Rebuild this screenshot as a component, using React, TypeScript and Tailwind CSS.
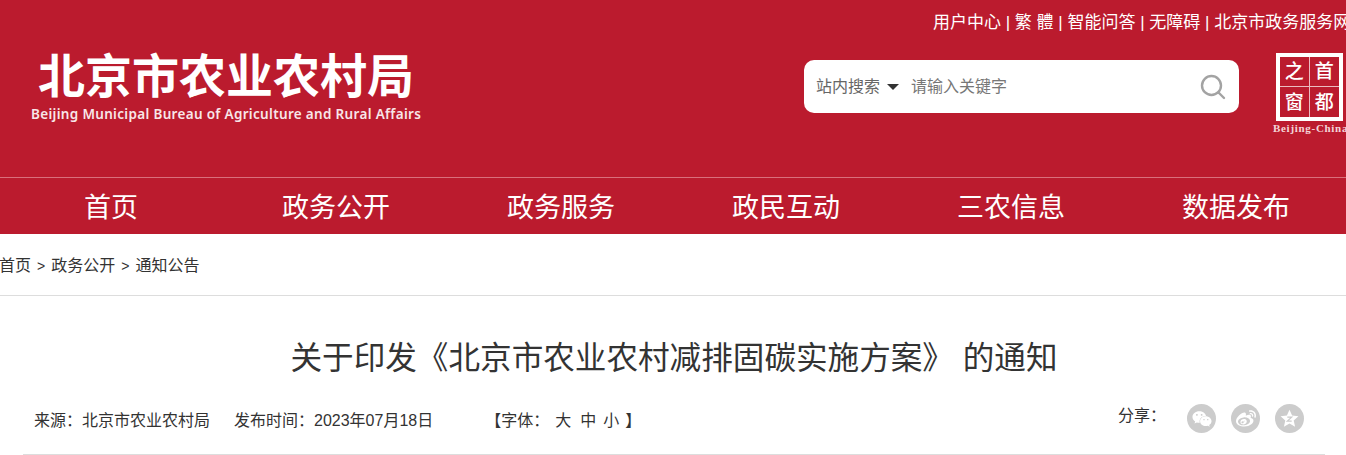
import { FaWeixin, FaWeibo } from "react-icons/fa";

const cjk = "font-['Liberation_Sans','Noto_Sans_CJK_SC',sans-serif]";

const navItems = ["首页", "政务公开", "政务服务", "政民互动", "三农信息", "数据发布"];

const ShareIcon = ({ children }: { children: React.ReactNode }) => (
  <span className="flex h-[29px] w-[29px] items-center justify-center rounded-full bg-[#cccccc] text-[20px] text-white">
    {children}
  </span>
);

export default function App() {
  return (
    <div className={`h-[455px] w-[1346px] overflow-hidden bg-white ${cjk}`}>
      <header className="h-[234px] bg-[#bb1b2e] text-white">
        <div className="h-[177px]">
          <div className="flex h-[44px] items-center overflow-hidden whitespace-nowrap pl-[933px] pt-[1px] text-[17px]">
            <span>用户中心 | 繁 體 | 智能问答 | 无障碍 | 北京市政务服务网</span>
          </div>
          <div className="flex items-start">
            <div className="ml-[31px] mt-[8px] w-[400px] shrink-0">
              <div className="ml-[7px] text-[47px] font-bold leading-[50px]">北京市农业农村局</div>
              <div className="mt-[3px] whitespace-nowrap font-['Noto_Sans',sans-serif] text-[13.5px] font-semibold leading-[18px] tracking-[0.32px] text-[#f8e6e8]">
                Beijing Municipal Bureau of Agriculture and Rural Affairs
              </div>
            </div>
            <div className="ml-[373px] mt-[16px] flex h-[53px] w-[435px] shrink-0 items-center rounded-[10px] bg-white pl-[12px] pr-[13px] pt-[1px] text-[16px] text-[#666]">
              <span>站内搜索</span>
              <span className="ml-[7px] h-0 w-0 border-x-[6px] border-t-[6px] border-x-transparent border-t-[#333]" />
              <span className="ml-[12px] flex-1 text-[#777]">请输入关键字</span>
              <svg viewBox="0 0 26 26" className="h-[26px] w-[26px]" fill="none" stroke="#a3a3a3" strokeWidth="2.4">
                <circle cx="11.5" cy="11.5" r="9.5" />
                <path d="M18.5 18.5 L24 24" strokeLinecap="round" />
              </svg>
            </div>
            <div className="ml-[37px] mt-[9px] w-[73px] shrink-0">
              <div className="grid h-[68px] w-[67px] grid-cols-2 grid-rows-2 border-[4px] border-white text-[19px] font-medium leading-none">
                <span className="flex items-center justify-center border-b border-r border-white/70">之</span>
                <span className="flex items-center justify-center border-b border-white/70">首</span>
                <span className="flex items-center justify-center border-r border-white/70">窗</span>
                <span className="flex items-center justify-center">都</span>
              </div>
              <div className="-ml-[3px] mt-[1px] whitespace-nowrap font-['Liberation_Serif',serif] text-[11px] font-bold leading-[12px] tracking-[0.7px] text-[#f3d5d8]">
                Beijing-China
              </div>
            </div>
          </div>
        </div>
        <nav className="flex h-[57px] items-center overflow-hidden border-t border-[#d9707c] pl-[84px] pt-[4px] text-[27px] leading-none">
          {navItems.map((item) => (
            <span key={item} className={item === "首页" ? "w-[198px] shrink-0" : "w-[225px] shrink-0"}>
              {item}
            </span>
          ))}
        </nav>
      </header>

      <div className="flex h-[62px] items-center border-b border-[#dddddd] pt-[3px] text-[16px] text-[#333]">
        <span className="-ml-[1px]">首页</span>
        <span className="mx-[6px] text-[14px]">&gt;</span>
        <span>政务公开</span>
        <span className="mx-[6px] text-[14px]">&gt;</span>
        <span>通知公告</span>
      </div>

      <h1 className="mt-[43px] pl-[2px] text-center text-[31.6px] font-normal leading-[38px] text-[#333]">
        关于印发《北京市农业农村减排固碳实施方案》 的通知
      </h1>

      <div className="ml-[23px] mr-[21px] mt-[19px] flex h-[59px] items-start border-b border-[#dddddd] pl-[11px] pr-[21px] text-[16px] text-[#333]">
        <span className="mt-[13px]">来源：北京市农业农村局</span>
        <span className="ml-[24px] mt-[13px]">发布时间：2023年07月18日</span>
        <div className="ml-[52px] mt-[13px] flex">
          <span>【字体：</span>
          <span className="ml-[6px]">大</span>
          <span className="ml-[9px]">中</span>
          <span className="ml-[7px]">小</span>
          <span className="ml-[6px]">】</span>
        </div>
        <span className="ml-auto mt-[8px]">分享：</span>
        <div className="ml-[21px] mt-[8px] flex gap-[15px]">
          <ShareIcon>
            <FaWeixin />
          </ShareIcon>
          <ShareIcon>
            <FaWeibo />
          </ShareIcon>
          <ShareIcon>
            <svg viewBox="0 0 24 24" className="h-[21px] w-[21px]" fill="#fff">
              <path d="M12 2 l3 6.6 7.2 .8 -5.4 4.8 1.6 7.1 -6.4 -3.7 -6.4 3.7 1.6 -7.1 -5.4 -4.8 7.2 -.8 z" />
              <path d="M9.5 10.5 h5 l-5 4.5 h5" fill="none" stroke="#cccccc" strokeWidth="1.4" />
            </svg>
          </ShareIcon>
        </div>
      </div>
    </div>
  );
}
